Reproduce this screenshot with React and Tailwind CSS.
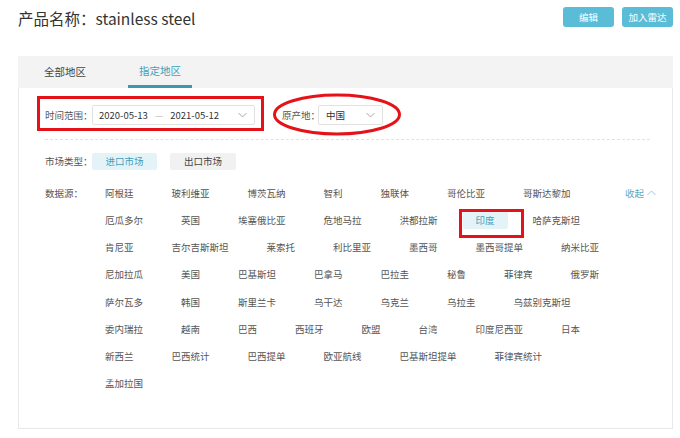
import React from 'react'

const rows = [
  ['阿根廷', '玻利维亚', '博茨瓦纳', '智利', '独联体', '哥伦比亚', '哥斯达黎加'],
  ['厄瓜多尔', '英国', '埃塞俄比亚', '危地马拉', '洪都拉斯', '印度', '哈萨克斯坦'],
  ['肯尼亚', '吉尔吉斯斯坦', '莱索托', '利比里亚', '墨西哥', '墨西哥提单', '纳米比亚'],
  ['尼加拉瓜', '美国', '巴基斯坦', '巴拿马', '巴拉圭', '秘鲁', '菲律宾', '俄罗斯'],
  ['萨尔瓦多', '韩国', '斯里兰卡', '乌干达', '乌克兰', '乌拉圭', '乌兹别克斯坦'],
  ['委内瑞拉', '越南', '巴西', '西班牙', '欧盟', '台湾', '印度尼西亚', '日本'],
  ['新西兰', '巴西统计', '巴西提单', '欧亚航线', '巴基斯坦提单', '菲律宾统计'],
  ['孟加拉国'],
]

function Chevron({ up = false, color = '#a8a8a8' }) {
  return (
    <svg width="9" height="6" viewBox="0 0 9 6" fill="none">
      <polyline
        points={up ? '0.5,5 4.5,1 8.5,5' : '0.5,1 4.5,5 8.5,1'}
        stroke={color}
        strokeWidth="1"
      />
    </svg>
  )
}

export default function App() {
  return (
    <div
      className="relative h-[438px] w-[680px] overflow-hidden bg-white text-[#555]"
      style={{ fontFamily: '"Noto Sans CJK SC", "Noto Sans", sans-serif' }}
    >
      {/* header */}
      <div className="flex items-start justify-between pl-[18px] pr-[7px] pt-[7px]">
        <h1 className="mt-[-1px] text-[15.5px] leading-[24px] font-normal text-[#333]">产品名称：stainless steel</h1>
        <div className="flex gap-[8px]">
          <button className="h-[20px] w-[51px] rounded-[3px] bg-[#5bbcd8] text-[9.5px] text-white">编辑</button>
          <button className="h-[20px] w-[51px] rounded-[3px] bg-[#5bbcd8] text-[9.5px] text-white">加入雷达</button>
        </div>
      </div>

      {/* panel */}
      <div className="ml-[18px] mt-[26px] w-[655px]">
        <div className="flex h-[32px] items-end bg-[#f3f3f3] pl-[15px]">
          <div className="flex h-full w-[64px] items-center justify-center text-[10.5px] text-[#444]">全部地区</div>
          <div className="ml-[31px] flex h-full w-[64px] flex-col items-center justify-center">
            <span className="flex-1 pt-[7px] text-[10.5px] text-[#3f9fba]">指定地区</span>
            <span className="h-[3px] w-full bg-[#3b98b2]" />
          </div>
        </div>

        <div className="h-[341px] border border-t-0 border-[#e8e8e8] pl-[26px] pr-[16px] pt-[17px] text-[9.5px]">
          {/* filters */}
          <div className="flex h-[20px] items-center">
            <span className="w-[47px] shrink-0 whitespace-nowrap">时间范围：</span>
            <div className="flex h-[20px] w-[163px] items-center rounded-[2px] border border-[#e2e2e2] pl-[6px] pr-[7px] text-[#333]">
              <span>2020-05-13</span>
              <span className="mx-[7px] text-[#bbb]">—</span>
              <span>2021-05-12</span>
              <span className="ml-auto flex">
                <Chevron />
              </span>
            </div>
            <span className="ml-[27px] w-[36px] shrink-0 whitespace-nowrap">原产地：</span>
            <div className="flex h-[20px] w-[65px] items-center rounded-[2px] border border-[#e2e2e2] pl-[7px] pr-[7px] text-[#333]">
              <span>中国</span>
              <span className="ml-auto flex">
                <Chevron />
              </span>
            </div>
          </div>

          <div className="mr-[6px] mt-[14px] border-t border-dashed border-[#e2e2e2]" />

          {/* market type */}
          <div className="mt-[13px] flex h-[17px] items-center">
            <span className="w-[47px] shrink-0 whitespace-nowrap">市场类型：</span>
            <span className="flex h-[17px] w-[65px] items-center justify-center rounded-[2px] bg-[#e4f3f8] text-[#3f9fba]">进口市场</span>
            <span className="ml-[13px] flex h-[17px] w-[66px] items-center justify-center rounded-[2px] bg-[#f1f1f1] text-[#444]">出口市场</span>
          </div>

          {/* data source */}
          <div className="mt-[14px] flex">
            <span className="flex h-[18px] w-[47px] shrink-0 items-center whitespace-nowrap">数据源：</span>
            <div className="flex flex-1 flex-col gap-y-[9.2px]">
              {rows.map((row, i) => (
                <div key={i} className="flex gap-x-[12px]">
                  {row.map((name) => (
                    <span
                      key={name}
                      className={
                        name === '印度'
                          ? 'flex h-[18px] items-center rounded-[2px] bg-[#e4f3f8] px-[13px] text-[#3f9fba]'
                          : 'flex h-[18px] items-center px-[13px] text-[#555]'
                      }
                    >
                      {name}
                    </span>
                  ))}
                </div>
              ))}
            </div>
            <span className="flex h-[18px] items-center gap-[3px] text-[#5aaac6]">
              收起
              <Chevron up color="#9fc8d6" />
            </span>
          </div>
        </div>
      </div>

      {/* red annotations */}
      <div className="pointer-events-none absolute left-[37px] top-[96px] h-[35px] w-[227px] border-[3px] border-[#e5121a]" />
      <svg className="pointer-events-none absolute left-[270px] top-[90px]" width="136" height="50" viewBox="0 0 136 50">
        <ellipse cx="67" cy="24.5" rx="62.5" ry="19.5" fill="none" stroke="#e5121a" strokeWidth="3" />
      </svg>
      <div className="pointer-events-none absolute left-[459px] top-[209px] h-[29px] w-[65px] border-[3px] border-[#e5121a]" />
    </div>
  )
}
